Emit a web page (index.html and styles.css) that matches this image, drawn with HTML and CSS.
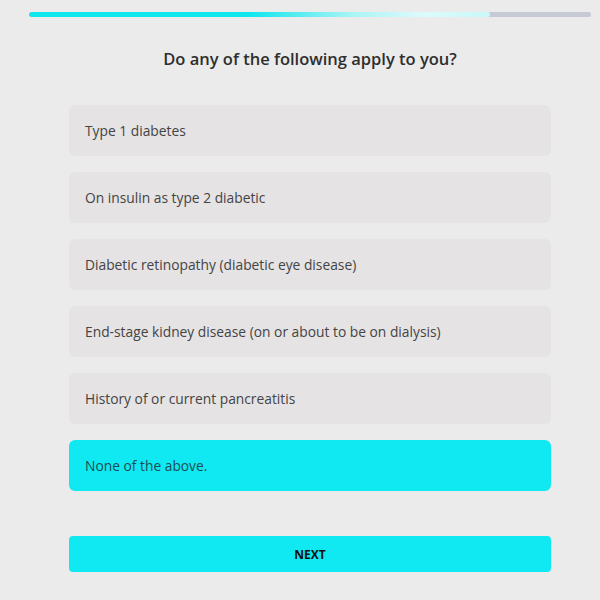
FILE: index.html
```html
<!DOCTYPE html>
<html lang="en">
<head>
    <meta charset="UTF-8">
    <meta name="viewport" content="width=device-width, initial-scale=1.0">
    <title>Questionnaire</title>
    <link rel="stylesheet" href="styles.css">
</head>
<body>
    <div class="page">
        <div class="progress">
            <div class="progress-fill" style="width: 82%"></div>
        </div>

        <h1>Do any of the following apply to you?</h1>

        <div class="options">
            <div class="option">Type 1 diabetes</div>
            <div class="option">On insulin as type 2 diabetic</div>
            <div class="option">Diabetic retinopathy (diabetic eye disease)</div>
            <div class="option">End-stage kidney disease (on or about to be on dialysis)</div>
            <div class="option">History of or current pancreatitis</div>
            <div class="option selected">None of the above.</div>
        </div>

        <button class="next-button">NEXT</button>
    </div>
</body>
</html>
```

FILE: styles.css
```css
body {
    font-family: 'Open Sans', Arial, sans-serif;
    margin: 0;
    background-color: #ebebeb;
    color: #333;
}
.page {
    width: 562px;
    margin-left: 29px;
    padding-top: 12px;
}
.progress {
    height: 5px;
    background-color: #c6cad4;
    border-radius: 3px;
    overflow: hidden;
}
.progress-fill {
    height: 100%;
    background: linear-gradient(to right, #10e6ee 0%, #10e6ee 48%, #a8f4f6 70%, #ddfbfb 86%, #c8f8f8 100%);
    border-radius: 3px;
}
h1 {
    font-size: 16.5px;
    font-weight: 600;
    text-align: center;
    color: #2e2e2e;
    margin: 30px 0 0;
    line-height: 24px;
}
.options {
    margin: 34px 40px 0;
    display: flex;
    flex-direction: column;
    gap: 16px;
}
.option {
    height: 51px;
    display: flex;
    align-items: center;
    padding: 0 16px;
    background-color: #e5e3e4;
    border-radius: 6px;
    font-size: 13.8px;
    color: #444;
}
.option.selected {
    background-color: #10e9f2;
    color: #1d4d52;
}
.next-button {
    display: block;
    width: 482px;
    height: 36px;
    margin: 45px 40px 0;
    background-color: #10e9f2;
    border: none;
    border-radius: 4px;
    font-family: 'Open Sans', Arial, sans-serif;
    font-weight: 700;
    font-size: 12px;
    color: #111;
}
```
